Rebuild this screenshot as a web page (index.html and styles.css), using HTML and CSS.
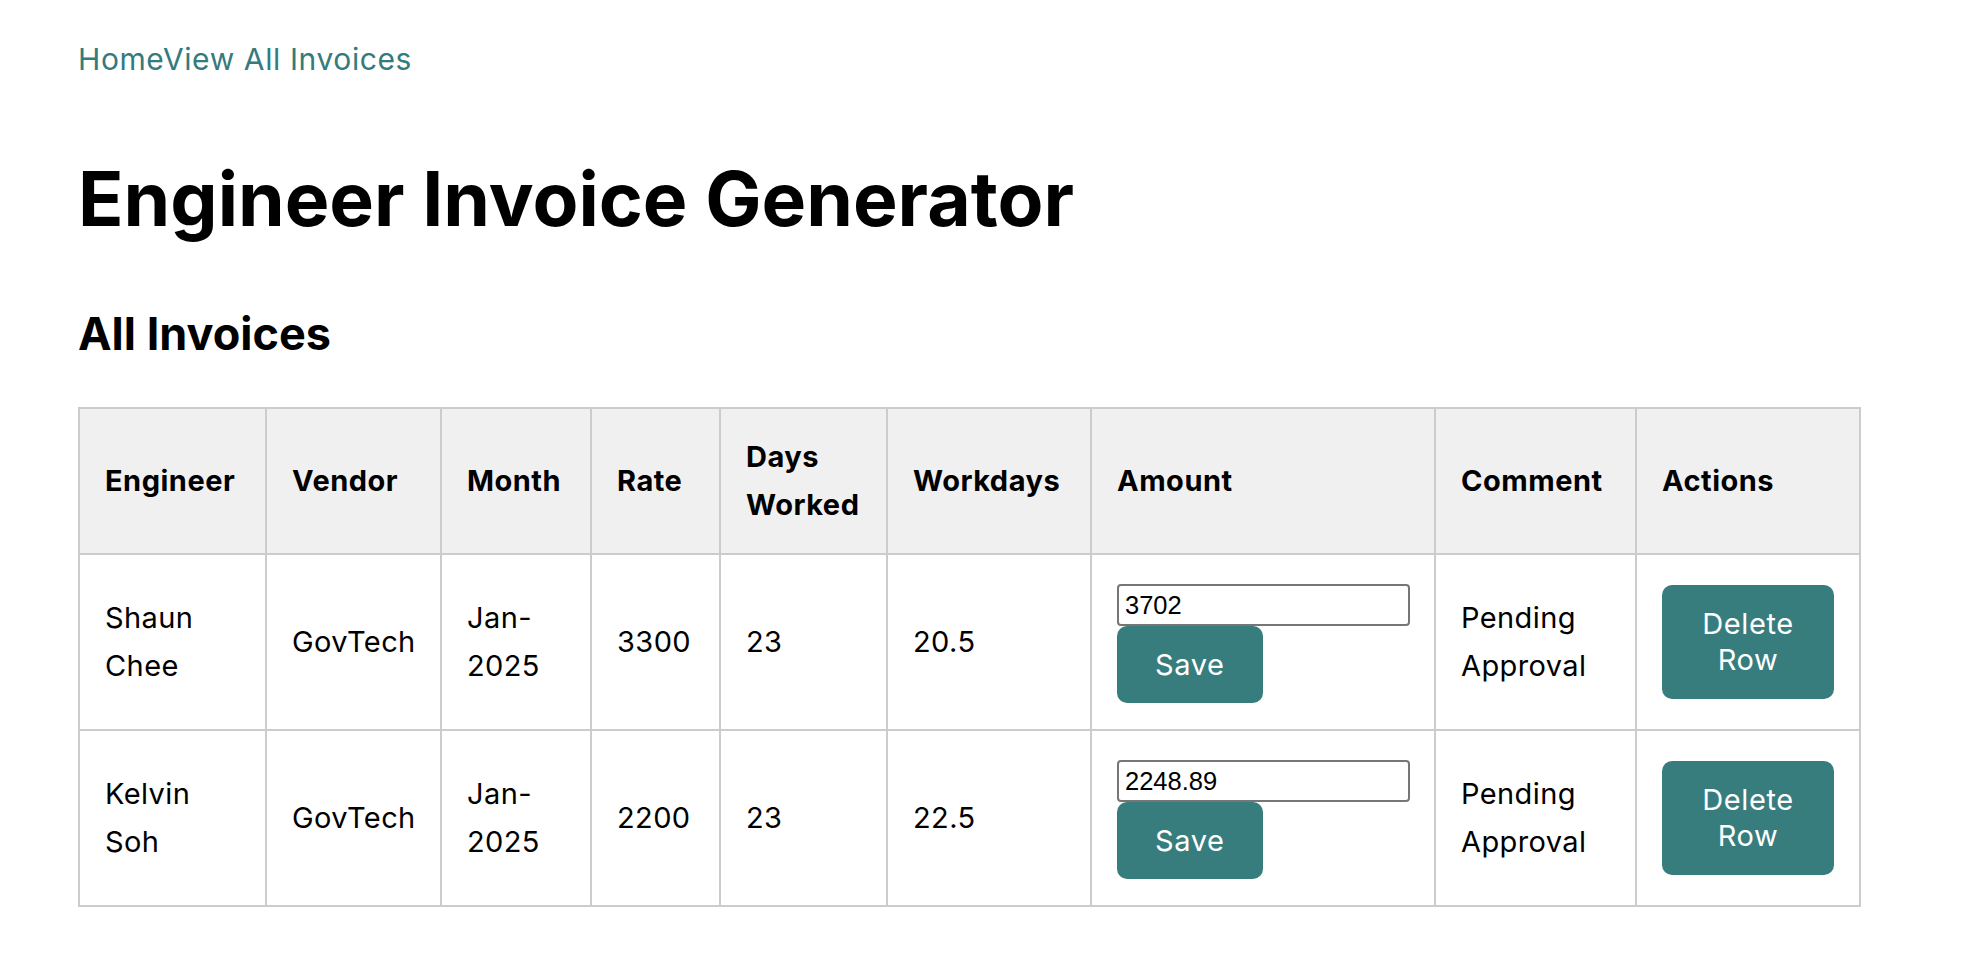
FILE: index.html
```html
<!DOCTYPE html>
<html lang="en">
<head>
<meta charset="utf-8">
<title>Engineer Invoice Generator</title>
<link rel="stylesheet" href="styles.css">
</head>
<body>
<div class="page">
  <nav class="nav"><a href="#">Home</a><a href="#">View All Invoices</a></nav>
  <h1 class="title">Engineer Invoice Generator</h1>
  <h2 class="subtitle">All Invoices</h2>
  <table class="invoices">
    <colgroup>
      <col class="c1"><col class="c2"><col class="c3"><col class="c4"><col class="c5"><col class="c6"><col class="c7"><col class="c8"><col class="c9">
    </colgroup>
    <thead>
      <tr>
        <th>Engineer</th><th>Vendor</th><th>Month</th><th>Rate</th><th>Days Worked</th><th>Workdays</th><th>Amount</th><th>Comment</th><th>Actions</th>
      </tr>
    </thead>
    <tbody>
      <tr>
        <td>Shaun Chee</td><td>GovTech</td><td>Jan-2025</td><td>3300</td><td>23</td><td>20.5</td>
        <td><div class="amount"><input class="amount-input" type="text" value="3702"><button class="btn">Save</button></div></td>
        <td>Pending Approval</td>
        <td><button class="btn btn-wrap">Delete Row</button></td>
      </tr>
      <tr>
        <td>Kelvin Soh</td><td>GovTech</td><td>Jan-2025</td><td>2200</td><td>23</td><td>22.5</td>
        <td><div class="amount"><input class="amount-input" type="text" value="2248.89"><button class="btn">Save</button></div></td>
        <td>Pending Approval</td>
        <td><button class="btn btn-wrap">Delete Row</button></td>
      </tr>
    </tbody>
  </table>
</div>
</body>
</html>
```
FILE: styles.css
```css
* { box-sizing: border-box; }
html, body { margin: 0; padding: 0; background: #ffffff; }
body {
  font-family: Inter, "Noto Sans", "Liberation Sans", sans-serif;
  font-size: 29px;
  letter-spacing: 0.4px;
  color: #000000;
}
.page {
  padding: 35px 78px 40px 78px;
}
.nav {
  line-height: 48px;
  height: 48px;
  font-size: 30px;
  letter-spacing: 0.6px;
}
.nav a {
  color: #347b7d;
  text-decoration: none;
}
.title {
  font-size: 75px;
  line-height: 86px;
  font-weight: 700;
  letter-spacing: 0;
  margin: 73px 0 0 0;
}
.subtitle {
  font-size: 45px;
  line-height: 55px;
  font-weight: 700;
  letter-spacing: 0;
  margin: 64px 0 0 0;
}
.invoices {
  margin-top: 46px;
  border-collapse: collapse;
  table-layout: fixed;
  width: 1781px;
}
.c1 { width: 187px; }
.c2 { width: 175px; }
.c3 { width: 150px; }
.c4 { width: 129px; }
.c5 { width: 167px; }
.c6 { width: 204px; }
.c7 { width: 344px; }
.c8 { width: 201px; }
.c9 { width: 224px; }
.invoices th, .invoices td {
  border: 2px solid #cccccc;
  padding: 24px 25px;
  text-align: left;
  vertical-align: middle;
  line-height: 48px;
  overflow: visible;
}
.invoices th {
  background: #f0f0f0;
  font-weight: 700;
  letter-spacing: 0.5px;
}
.invoices td {
  height: 176px;
  color: #000000;
}
.amount {
  display: flex;
  flex-direction: column;
  align-items: flex-start;
  padding-top: 3px;
}
.amount-input {
  display: block;
  width: 293px;
  height: 42px;
  margin: 0;
  padding: 2px 6px;
  font-family: "Liberation Sans", Arial, sans-serif;
  font-size: 25.5px;
  letter-spacing: 0;
  color: #000;
  border: 2px solid #767676;
  border-radius: 4px;
  background: #fff;
}
.btn {
  display: inline-block;
  background: #377d7e;
  color: #ffffff;
  border: none;
  border-radius: 10px;
  font-family: Inter, "Noto Sans", "Liberation Sans", sans-serif;
  font-size: 29px;
  letter-spacing: 0.6px;
  line-height: 35px;
  padding: 21px 38px;
  margin: 0;
  cursor: pointer;
}
.btn-wrap {
  line-height: 36px;
  width: 172px;
  padding: 21px 16px;
  text-align: center;
}
```
